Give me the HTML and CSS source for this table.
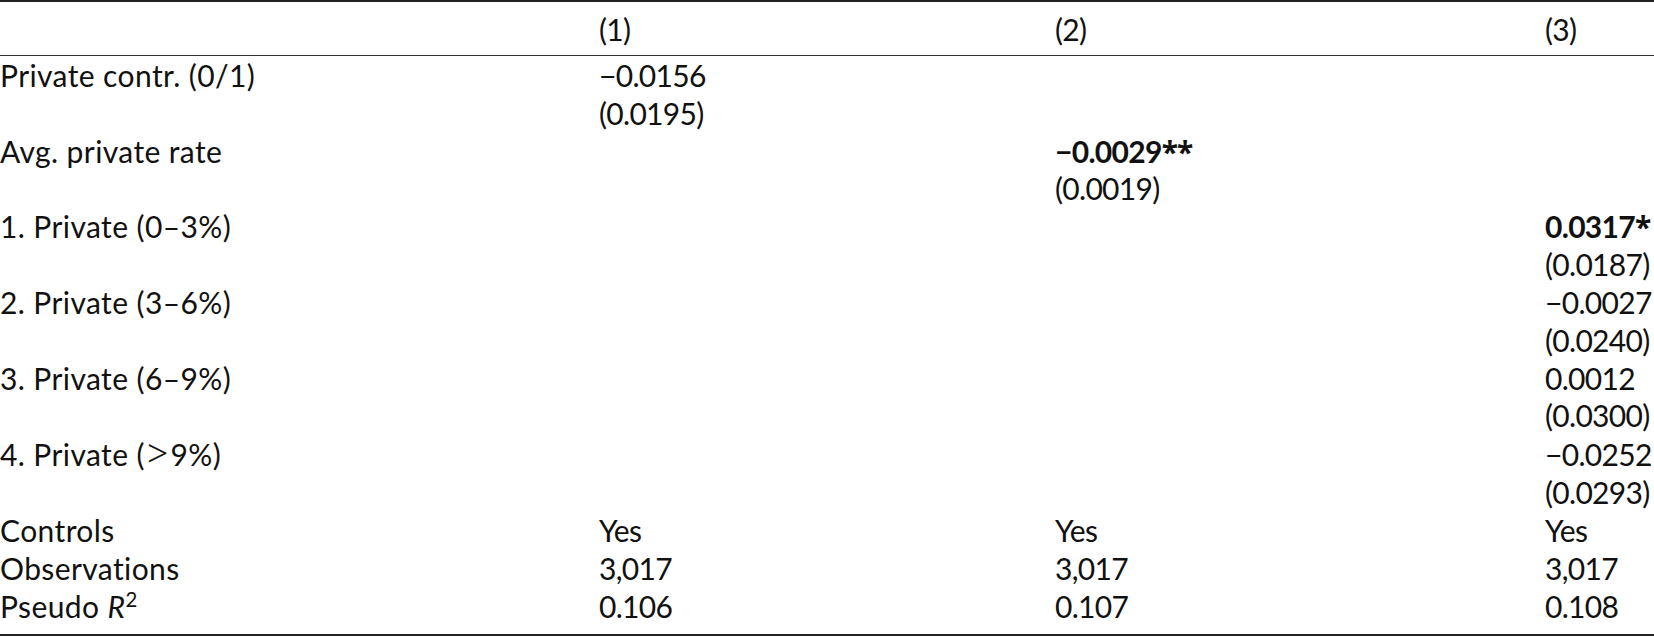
FILE: index.html
```html
<!DOCTYPE html>
<html lang="en">
<head>
<meta charset="utf-8">
<title>Regression table</title>
<link rel="stylesheet" href="styles.css">
</head>
<body>
<table class="reg">
  <colgroup>
    <col class="c0">
    <col class="c1">
    <col class="c2">
    <col class="c3">
  </colgroup>
  <thead>
    <tr class="head">
      <th></th>
      <th>(1)</th>
      <th>(2)</th>
      <th>(3)</th>
    </tr>
  </thead>
  <tbody>
    <tr class="first"><td>Private contr. (0/1)</td><td>−0.0156</td><td></td><td></td></tr>
    <tr><td></td><td>(0.0195)</td><td></td><td></td></tr>
    <tr><td>Avg. private rate</td><td></td><td><b>−0.0029<span class="star">**</span></b></td><td></td></tr>
    <tr><td></td><td></td><td>(0.0019)</td><td></td></tr>
    <tr><td>1. Private (0–3%)</td><td></td><td></td><td><b>0.0317<span class="star">*</span></b></td></tr>
    <tr><td></td><td></td><td></td><td>(0.0187)</td></tr>
    <tr><td>2. Private (3–6%)</td><td></td><td></td><td>−0.0027</td></tr>
    <tr><td></td><td></td><td></td><td>(0.0240)</td></tr>
    <tr><td>3. Private (6–9%)</td><td></td><td></td><td>0.0012</td></tr>
    <tr><td></td><td></td><td></td><td>(0.0300)</td></tr>
    <tr><td>4. Private (<span class="gt">&gt;</span>9%)</td><td></td><td></td><td>−0.0252</td></tr>
    <tr><td></td><td></td><td></td><td>(0.0293)</td></tr>
    <tr><td>Controls</td><td>Yes</td><td>Yes</td><td>Yes</td></tr>
    <tr><td>Observations</td><td>3,017</td><td>3,017</td><td>3,017</td></tr>
    <tr class="last"><td>Pseudo <i>R</i><sup>2</sup></td><td>0.106</td><td>0.107</td><td>0.108</td></tr>
  </tbody>
</table>
</body>
</html>
```

FILE: styles.css
```css
html, body {
  margin: 0;
  padding: 0;
  background: #ffffff;
}

body {
  font-family: Lato, "Noto Sans", sans-serif;
  font-size: 30px;
  color: #111111;
  font-variant-ligatures: none;
}

.reg {
  width: 1654px;
  border-collapse: collapse;
  table-layout: fixed;
  border-top: 2px solid #222222;
  border-bottom: 2px solid #222222;
}

.c0 { width: 599px; }
.c1 { width: 456px; }
.c2 { width: 490px; }
.c3 { width: 109px; }

.reg th,
.reg td {
  padding: 0;
  text-align: left;
  vertical-align: baseline;
  white-space: nowrap;
  line-height: 37.85px;
  font-weight: normal;
  letter-spacing: -0.7px;
}

.reg td:first-child {
  letter-spacing: 0.4px;
}

.head th {
  padding-top: 9px;
  padding-bottom: 6px;
  border-bottom: 1px solid #333333;
}

.first td {
  padding-top: 1px;
}

.last td {
  padding-bottom: 8px;
}

.reg b {
  font-weight: bold;
}

.star {
  font-family: "Noto Sans", sans-serif;
  font-weight: bold;
  letter-spacing: -1px;
}

.reg i {
  font-style: italic;
}

.reg sup {
  font-size: 0.68em;
  line-height: 0;
  vertical-align: 0.55em;
}

.gt {
  font-family: "Liberation Serif", serif;
  font-size: 1.25em;
  padding: 0 2px 0 2px;
}
```
